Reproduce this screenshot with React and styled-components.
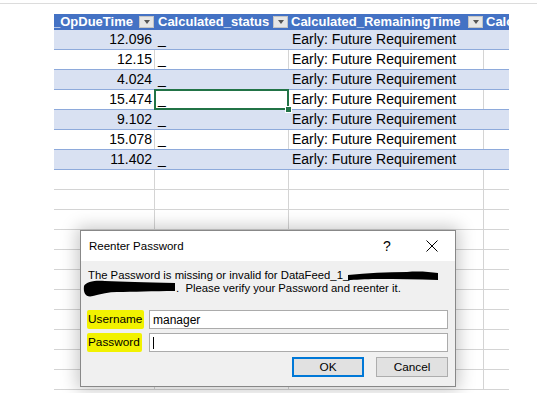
import React from 'react'
import styled, { createGlobalStyle } from 'styled-components'

const GlobalStyle = createGlobalStyle`
    html, body {
        margin: 0;
        padding: 0;
        background: #ffffff;
    }
    body {
        width: 537px;
        height: 393px;
        overflow: hidden;
    }
`

const Page = styled.div`
    position: relative;
    width: 537px;
    height: 393px;
    overflow: hidden;
    background: #ffffff;
`

const TopEdge = styled.div`
    height: 3px;
    border-bottom: 1px solid #dcdcdc;
`

const Sheet = styled.div`
    margin: 10px 0 0 54px;
    width: 455px;
    display: flex;
    flex-direction: column;
    font-family: "Liberation Sans", Arial, sans-serif;
    font-size: 14px;
    color: #000;
`

const Row = styled.div`
    display: grid;
    grid-template-columns: 101px 134px 195px 25px;
    height: ${({ $header }) => ($header ? '16px' : '20px')};
    box-sizing: border-box;
    background: ${({ $header, $banded }) => ($header ? '#4472c4' : $banded ? '#d9e1f2' : '#ffffff')};
    border-bottom: ${({ $header, $data }) => ($header ? 'none' : $data ? '1px solid #8eaadb' : '1px solid #d4d4d4')};
`

const Cell = styled.div`
    position: relative;
    box-sizing: border-box;
    border-right: 1px solid ${({ $lined }) => ($lined ? '#d4d4d4' : 'transparent')};
    line-height: 19px;
    padding: 0 2px 0 3px;
    white-space: nowrap;
    overflow: visible;
    text-align: ${({ $right }) => ($right ? 'right' : 'left')};

    ${({ $selected }) => $selected && `
        &::after {
            content: '';
            position: absolute;
            left: -1px;
            top: -1px;
            right: -1px;
            bottom: -1px;
            border: 2px solid #217346;
            z-index: 2;
        }
        &::before {
            content: '';
            position: absolute;
            right: -4px;
            bottom: -4px;
            width: 5px;
            height: 5px;
            background: #217346;
            border: 1px solid #ffffff;
            z-index: 3;
        }
    `}
`

const HeadCell = styled.div`
    display: flex;
    align-items: center;
    justify-content: space-between;
    overflow: hidden;
    padding: 0 1px 0 ${({ $indent }) => $indent}px;
    color: #ffffff;
    font-weight: bold;
    font-size: 13px;
    line-height: 16px;
    white-space: nowrap;
`

const HeadText = styled.span`
    margin-left: ${({ $shift = 0 }) => $shift}px;
`

const FilterButton = styled.span`
    flex: none;
    width: 15px;
    height: 12px;
    box-sizing: border-box;
    background: #e6e6e6;
    border: 1px solid #c4c4c4;
    display: flex;
    align-items: center;
    justify-content: center;

    &::after {
        content: '';
        border-left: 3.5px solid transparent;
        border-right: 3.5px solid transparent;
        border-top: 4px solid #555555;
    }
`

const Dialog = styled.div`
    position: absolute;
    left: 80px;
    top: 230px;
    width: 376px;
    height: 157px;
    box-sizing: border-box;
    border: 1px solid #888888;
    background: #f0f0f0;
    box-shadow: 0 0 16px 3px rgba(0, 0, 0, 0.22);
    display: flex;
    flex-direction: column;
    font-family: "Liberation Sans", Arial, sans-serif;
    font-size: 11.3px;
    color: #000;
`

const TitleBar = styled.div`
    height: 30px;
    background: #ffffff;
    display: flex;
    align-items: center;
    padding: 0 0 0 8px;
    flex: none;
    font-size: 11.5px;
`

const Title = styled.div`
    flex: 1;
`

const HelpMark = styled.span`
    width: 14px;
    margin-right: 29px;
    font-size: 14px;
`

const CloseIcon = styled.svg`
    width: 12px;
    height: 12px;
    margin-right: 17px;
`

const Body = styled.div`
    position: relative;
    padding: 8px 7px 0 7px;
    display: flex;
    flex-direction: column;
`

const Message = styled.div`
    position: relative;
    line-height: 13px;
    white-space: nowrap;
`

const Hidden = styled.span`
    display: inline-block;
    width: ${({ $w }) => $w}px;
`

const Scribble = styled.svg`
    position: absolute;
    left: ${({ $x }) => $x}px;
    top: ${({ $y }) => $y}px;
`

const Form = styled.div`
    margin-top: 15px;
    display: grid;
    grid-template-columns: 61px 1fr;
    row-gap: 4px;
    align-items: center;
`

const Label = styled.span`
    justify-self: start;
    background: #f2f200;
    padding: 2px 2px 3px 1px;
    margin-left: -1px;
    border-radius: 2px;
    font-size: 11.8px;
`

const Input = styled.div`
    height: 19px;
    box-sizing: border-box;
    background: #ffffff;
    border: 1px solid #ababab;
    padding-left: 3px;
    display: flex;
    align-items: center;
    font-size: 12px;
`

const Caret = styled.span`
    width: 1px;
    height: 12px;
    background: #000;
`

const Buttons = styled.div`
    margin-top: 5px;
    display: flex;
    justify-content: flex-end;
    gap: 12px;
`

const Button = styled.div`
    width: 72px;
    height: 20px;
    box-sizing: border-box;
    background: #e1e1e1;
    border: ${({ $primary }) => ($primary ? '2px solid #0078d7' : '1px solid #adadad')};
    display: flex;
    align-items: center;
    justify-content: center;
    font-size: 11.8px;
`

const rows = [
    ['12.096', true],
    ['12.15', false],
    ['4.024', true],
    ['15.474', false],
    ['9.102', true],
    ['15.078', false],
    ['11.402', true],
]

function App() {
    return (
        <Page>
            <GlobalStyle />
            <TopEdge />
            <Sheet>
                <Row $header>
                    <HeadCell $indent={0}><HeadText $shift={-1}>_OpDueTime</HeadText><FilterButton /></HeadCell>
                    <HeadCell $indent={3}><HeadText>Calculated_status</HeadText><FilterButton /></HeadCell>
                    <HeadCell $indent={2}><HeadText>Calculated_RemainingTime</HeadText><FilterButton /></HeadCell>
                    <HeadCell $indent={2}><HeadText>Calc</HeadText></HeadCell>
                </Row>
                {rows.map(([value, banded], i) => (
                    <Row key={i} $data $banded={banded}>
                        <Cell $right $lined={!banded}>{value}</Cell>
                        <Cell $lined={!banded} $selected={i === 3}>_</Cell>
                        <Cell $lined={!banded}>Early: Future Requirement</Cell>
                        <Cell />
                    </Row>
                ))}
                {Array.from({ length: 11 }).map((_, i) => (
                    <Row key={'e' + i}>
                        <Cell $lined />
                        <Cell $lined />
                        <Cell $lined />
                        <Cell />
                    </Row>
                ))}
            </Sheet>

            <Dialog>
                <TitleBar>
                    <Title>Reenter Password</Title>
                    <HelpMark>?</HelpMark>
                    <CloseIcon viewBox="0 0 12 12">
                        <path d="M0.5 0.5 L11.5 11.5 M11.5 0.5 L0.5 11.5" stroke="#000" strokeWidth="1" fill="none" />
                    </CloseIcon>
                </TitleBar>
                <Body>
                    <Message>
                        The Password is missing or invalid for DataFeed_1_<Hidden $w={88} />
                        <br />
                        <Hidden $w={88} />.&nbsp; Please verify your Password and reenter it.
                        <Scribble $x={259} $y={1} width="92" height="11" viewBox="0 0 92 11">
                            <path d="M1 5 C20 3 40 2 60 2 C72 1 82 2 91 3 L91 10 C70 9 50 9 30 9 C18 9 8 10 1 10 Z" fill="#000" />
                        </Scribble>
                        <Scribble $x={-5} $y={10} width="94" height="19" viewBox="0 0 94 19">
                            <path d="M1 7 C3 2 14 1 22 2 C40 3 60 3 92 4 L92 12 C70 12 50 13 34 13 C26 13 18 15 10 17 C3 19 0 14 1 7 Z" fill="#000" />
                        </Scribble>
                    </Message>
                    <Form>
                        <Label>Username</Label>
                        <Input>manager</Input>
                        <Label>Password</Label>
                        <Input><Caret /></Input>
                    </Form>
                    <Buttons>
                        <Button $primary>OK</Button>
                        <Button>Cancel</Button>
                    </Buttons>
                </Body>
            </Dialog>
        </Page>
    )
}

export default App
